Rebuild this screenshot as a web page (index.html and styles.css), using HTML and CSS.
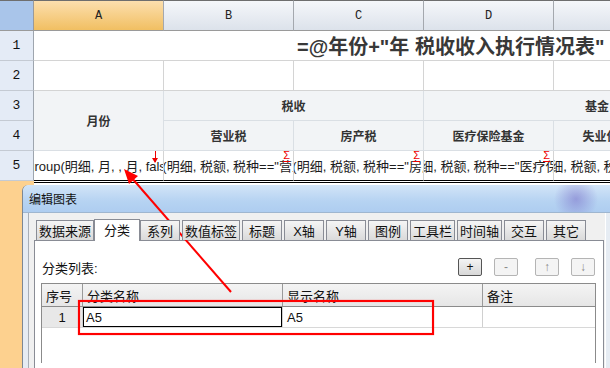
FILE: index.html
```html
<!DOCTYPE html>
<html lang="zh-CN">
<head>
    <meta charset="UTF-8">
    <title>编辑图表</title>
    <link rel="stylesheet" href="styles.css">
</head>
<body>
<div class="screen">
    <div class="sheet">
        <div class="corner"></div>
        <div class="col-head active">A</div>
        <div class="col-head">B</div>
        <div class="col-head">C</div>
        <div class="col-head">D</div>
        <div class="col-head">E</div>
        <div class="col-head">F</div>

        <div class="row-head">1</div>
        <div class="cell title-cell">=@年份+"年 税收收入执行情况表"</div>

        <div class="row-head">2</div>
        <div class="cell"></div>
        <div class="cell"></div>
        <div class="cell"></div>
        <div class="cell"></div>
        <div class="cell"></div>
        <div class="cell"></div>

        <div class="row-head">3</div>
        <div class="cell head month">月份</div>
        <div class="cell head span-2">税收</div>
        <div class="cell head span-3">基金</div>

        <div class="row-head">4</div>
        <div class="cell head">营业税</div>
        <div class="cell head">房产税</div>
        <div class="cell head">医疗保险基金</div>
        <div class="cell head">失业保险基金</div>
        <div class="cell head"></div>

        <div class="row-head">5</div>
        <div class="cell formula">=group(明细, 月, , 月, false)<span class="mark-down"></span></div>
        <div class="cell formula">=sum(明细, 税额, 税种=="营业税")<span class="mark-sum">Σ</span></div>
        <div class="cell formula">=sum(明细, 税额, 税种=="房产税")<span class="mark-sum">Σ</span></div>
        <div class="cell formula">=sum(明细, 税额, 税种=="医疗保险基金")<span class="mark-sum">Σ</span></div>
        <div class="cell formula">=sum(明细, 税额, 税种=="失业保险基金")<span class="mark-sum">Σ</span></div>
        <div class="cell formula"></div>
    </div>

    <div class="below">
        <div class="below-head"></div>
        <div class="below-rest"></div>
    </div>

    <div class="dialog">
        <div class="titlebar">编辑图表</div>
        <div class="frame">
            <div class="client">
                <div class="tabs">
                    <div class="tab">数据来源</div>
                    <div class="tab on">分类</div>
                    <div class="tab">系列</div>
                    <div class="tab">数值标签</div>
                    <div class="tab">标题</div>
                    <div class="tab">X轴</div>
                    <div class="tab">Y轴</div>
                    <div class="tab">图例</div>
                    <div class="tab">工具栏</div>
                    <div class="tab">时间轴</div>
                    <div class="tab">交互</div>
                    <div class="tab">其它</div>
                </div>
                <div class="panel">
                    <div class="toolbar">
                        <span class="label">分类列表:</span>
                        <span class="btn first">+</span>
                        <span class="btn off">-</span>
                        <span class="btn off wide-gap">↑</span>
                        <span class="btn off">↓</span>
                    </div>
                    <div class="table">
                        <div class="tr th">
                            <div class="td c1">序号</div>
                            <div class="td c2">分类名称</div>
                            <div class="td c3">显示名称</div>
                            <div class="td c4">备注</div>
                        </div>
                        <div class="tr">
                            <div class="td c1 num">1</div>
                            <div class="td c2 editing">A5</div>
                            <div class="td c3">A5</div>
                            <div class="td c4"></div>
                        </div>
                    </div>
                </div>
            </div>
        </div>
    </div>

    <div class="callout"></div>
    <svg class="arrow" width="610" height="368" viewBox="0 0 610 368">
        <line x1="231" y1="292" x2="131" y2="177" stroke="#ff0000" stroke-width="2"/>
        <polygon points="124,169 138,176 129,184" fill="#ff0000"/>
    </svg>
</div>
</body>
</html>
```

FILE: styles.css
```css
* {
    box-sizing: border-box;
}

body {
    margin: 0;
    background: #fff;
    font-family: "Liberation Sans", "Noto Sans CJK SC", sans-serif;
    color: #000;
}

.screen {
    position: relative;
    width: 610px;
    height: 368px;
    overflow: hidden;
}

/* spreadsheet */

.sheet {
    display: grid;
    grid-template-columns: 34px 130px 130px 130px 130px 130px 87px;
    grid-template-rows: 31px 30px 30px 30px 30px 30px;
    width: max-content;
}

.corner {
    background: #a9c5ea;
    border-top: 1px solid #6e6e6e;
    border-right: 1px solid #9a9a9a;
    border-bottom: 1px solid #9a9a9a;
}

.col-head {
    display: flex;
    align-items: center;
    justify-content: center;
    font-family: "Liberation Mono", monospace;
    font-size: 12px;
    color: #222;
    background: linear-gradient(#f5f7fa, #dce2eb);
    border-top: 1px solid #6e6e6e;
    border-right: 1px solid #a4a8ae;
    border-bottom: 1px solid #9a9a9a;
}

.col-head.active {
    background: linear-gradient(#fcdfae, #f1bf62);
}

.row-head {
    display: flex;
    align-items: center;
    justify-content: center;
    font-family: "Liberation Mono", monospace;
    font-size: 13px;
    color: #111;
    background: #e4ebf6;
    border-right: 1px solid #9ea5ae;
    border-bottom: 1px solid #c4cad3;
}

.cell {
    position: relative;
    display: flex;
    align-items: center;
    justify-content: center;
    overflow: hidden;
    white-space: nowrap;
    border-right: 1px solid #d4d4d4;
    border-bottom: 1px solid #d4d4d4;
}

.title-cell {
    grid-column: span 6;
    justify-content: flex-start;
    padding-left: 263px;
    font-size: 20px;
    font-weight: bold;
    color: #383838;
}

.cell.head {
    background: #f2f4f6;
    border-color: #dadfe4;
    font-size: 12px;
    font-weight: bold;
    color: #333;
}

.month {
    grid-row: span 2;
}

.span-2 {
    grid-column: span 2;
}

.span-3 {
    grid-column: span 3;
}

.formula {
    font-size: 13px;
    color: #1c1c1c;
    border-bottom: 1px solid #000;
}

.mark-down {
    position: absolute;
    right: 7px;
    top: 0;
    width: 1px;
    height: 11px;
    background: #e00;
}

.mark-down::after {
    content: "";
    position: absolute;
    left: -3px;
    bottom: -1px;
    border-left: 3.5px solid transparent;
    border-right: 3.5px solid transparent;
    border-top: 5px solid #e00;
}

.mark-sum {
    position: absolute;
    right: 3px;
    top: -2px;
    font-size: 11px;
    line-height: 12px;
    color: #e00;
    border-bottom: 1px solid #e00;
}

.below {
    display: flex;
    height: 187px;
}

.below-head {
    width: 34px;
    background: #fdd18f;
}

.below-rest {
    flex: 1;
    background: linear-gradient(#fff 0 1px, #000 1px 2px, #fff 2px);
}

/* dialog */

.dialog {
    position: absolute;
    left: 22px;
    top: 185px;
    width: 588px;
    height: 190px;
    border-left: 1px solid #7d8894;
    border-top-left-radius: 6px;
    background: #e3eaf2;
    font-size: 13px;
}

.titlebar {
    height: 28px;
    line-height: 30px;
    padding-left: 6px;
    font-size: 12px;
    color: #111;
    border-top-left-radius: 6px;
    border-bottom: 1px solid #9fb6cf;
    background:
        radial-gradient(circle at 553px 14px, rgba(120, 110, 200, 0.55), rgba(120, 110, 200, 0) 22px),
        linear-gradient(#d2e4f7, #b6d3f2 60%, #aecdf0);
}

.frame {
    height: 162px;
    padding-left: 5px;
    padding-right: 4px;
    background: #e6ecf3;
}

.client {
    height: 100%;
    padding: 7px 2px 0 5px;
    background: #f0f0f0;
    border-left: 1px solid #a8aeb6;
    border-right: 1px solid #fff;
}

.tabs {
    display: flex;
    align-items: flex-end;
    gap: 2px;
    height: 20px;
    padding-left: 2px;
    position: relative;
    z-index: 1;
}

.tab {
    height: 20px;
    min-width: 40px;
    padding: 0 2px;
    display: flex;
    align-items: center;
    justify-content: center;
    font-size: 13px;
    color: #111;
    border: 1px solid #898c95;
    border-bottom: none;
    background: linear-gradient(#f5f5f5, #dadada);
}

.tab.on {
    height: 22px;
    min-width: 46px;
    margin: 0 -2px -1px;
    background: #fff;
    padding-bottom: 2px;
}

.panel {
    height: 130px;
    width: 570px;
    border: 1px solid #898c95;
    background: #fff;
}

.toolbar {
    display: flex;
    align-items: center;
    height: 35px;
    padding: 17px 8px 0 7px;
}

.label {
    font-size: 13px;
    color: #111;
}

.btn {
    width: 24px;
    height: 18px;
    margin-left: 12px;
    display: flex;
    align-items: center;
    justify-content: center;
    font-size: 12px;
    color: #111;
    border: 1px solid #555;
    border-radius: 2px;
    background: linear-gradient(#f4f4f4, #d8d8d8);
}

.btn.first {
    margin-left: auto;
}

.btn.off {
    color: #8a8a8a;
    border-color: #b4b4b4;
    background: #f4f4f4;
}

.btn.wide-gap {
    margin-left: 17px;
}

.table {
    margin: 7px 0 0 6px;
    width: 555px;
    height: 80px;
    border: 1px solid #8b8b8b;
    border-bottom: none;
}

.tr {
    display: flex;
    height: 21px;
    border-bottom: 1px solid #d8d8d8;
}

.tr.th {
    height: 23px;
    border-bottom: 1px solid #8b8b8b;
    background: linear-gradient(#f4f4f4, #e6e6e6);
}

.td {
    display: flex;
    align-items: center;
    padding-left: 4px;
    font-size: 13px;
    color: #111;
    border-right: 1px solid #d0d0d0;
}

.th .td {
    border-right-color: #9a9a9a;
}

.c1 { width: 41px; }
.c2 { width: 200px; }
.c3 { width: 200px; }
.c4 { flex: 1; border-right: none; }

.td.num {
    justify-content: center;
    padding-left: 0;
    background: #e8e8e8;
}

.td.editing {
    box-shadow: inset 0 0 0 1px #000;
    padding-left: 3px;
}

/* annotations */

.callout {
    position: absolute;
    left: 78px;
    top: 300px;
    width: 356px;
    height: 35px;
    border: 2px solid #ff0000;
    box-shadow: 0 0 1px #ff6060, inset 0 0 1px #ff6060;
}

.arrow {
    position: absolute;
    left: 0;
    top: 0;
    pointer-events: none;
}
```
